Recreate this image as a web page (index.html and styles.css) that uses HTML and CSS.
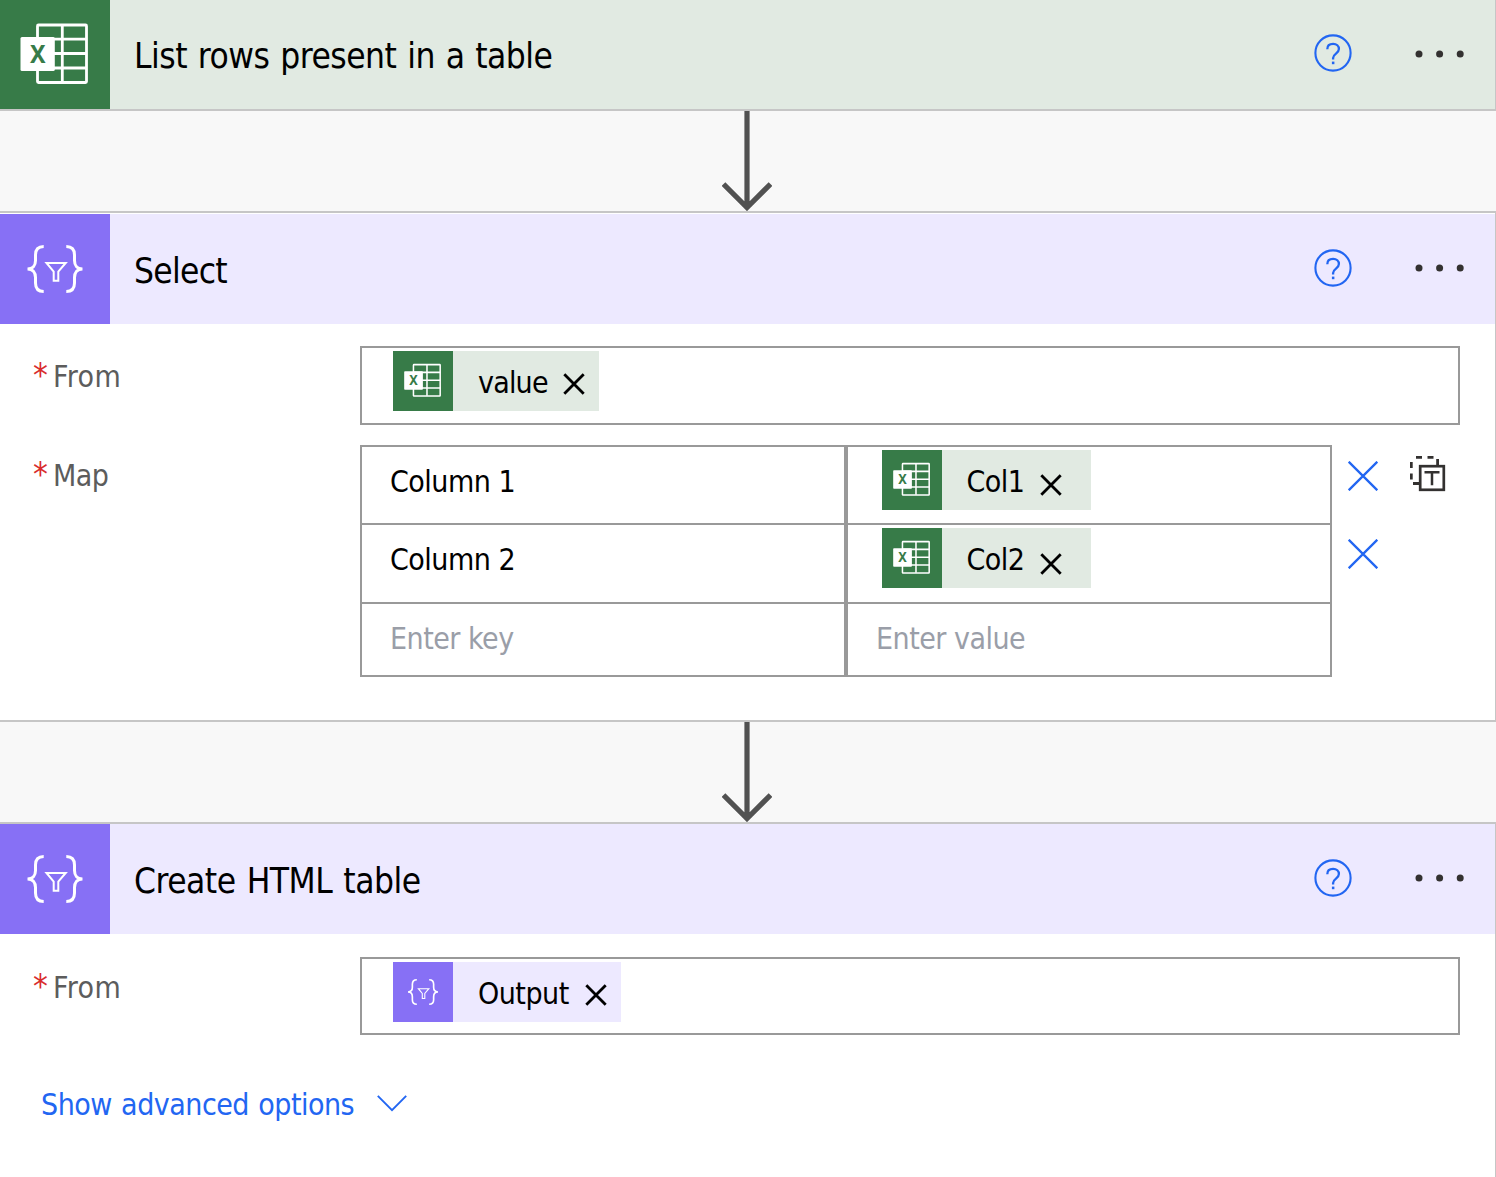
FILE: index.html
```html
<!DOCTYPE html>
<html lang="en">
<head>
<meta charset="utf-8">
<title>Flow designer</title>
<link rel="stylesheet" href="styles.css">
</head>
<body>
<svg class="defs" aria-hidden="true">
  <symbol id="excel" viewBox="0 0 110 110">
    <rect x="37.5" y="25" width="49" height="57.5" rx="1" fill="none" stroke="#fff" stroke-width="2.8"/>
    <path d="M62.3 25V82M37 39.2H87M37 53.5H87M37 68H87" fill="none" stroke="#fff" stroke-width="2.8"/>
    <rect x="20.5" y="37" width="34.3" height="34" rx="1.5" fill="#fff"/>
    <text x="29.9" y="63" textLength="15.6" lengthAdjust="spacingAndGlyphs" class="excel-x">X</text>
  </symbol>
  <symbol id="data" viewBox="0 0 110 110">
    <g fill="none" stroke="#fff">
      <path stroke-width="3" d="M43.7 32.5C38 32.5 35.5 35.5 35.5 41V46.5C35.5 51 33 55 27.5 55C33 55 35.5 59 35.5 63.5V69C35.5 74.5 38 77.5 43.7 77.5M66.3 32.5C72 32.5 74.5 35.5 74.5 41V46.5C74.5 51 77 55 82.5 55C77 55 74.5 59 74.5 63.5V69C74.5 74.5 72 77.5 66.3 77.5"/>
      <path stroke-width="2" d="M46.5 49H65.7L58.3 57.5V66.8H53.7V57.5Z"/>
    </g>
  </symbol>
  <symbol id="help" viewBox="0 0 38 38">
    <circle cx="19" cy="19" r="17.6" fill="none" stroke="#2266f2" stroke-width="2.1"/>
    <path d="M13.3 15.2C13.3 11.8 15.7 9.9 19.1 9.9C22.6 9.9 24.9 12 24.9 15C24.9 19.5 19.1 19.6 19.1 24V25.5" fill="none" stroke="#2266f2" stroke-width="2.3"/>
    <rect x="17.9" y="27.6" width="2.5" height="2.6" fill="#2266f2"/>
  </symbol>
  <symbol id="dots" viewBox="0 0 50 8">
    <g fill="#333130"><circle cx="4" cy="4" r="3.5"/><circle cx="24.6" cy="4" r="3.5"/><circle cx="45.2" cy="4" r="3.5"/></g>
  </symbol>
  <symbol id="cross" viewBox="0 0 22 22"><path d="M1.3 1.3L20.7 20.7M20.7 1.3L1.3 20.7" stroke="#000" stroke-width="2.8"/></symbol>
  <symbol id="remove" viewBox="0 0 30 30"><path d="M.7.7L29.3 29.3M29.3.7L.7 29.3" stroke="#2266f2" stroke-width="2.3"/></symbol>
  <symbol id="arrow" viewBox="0 0 50 100"><path d="M25 0V96M1.5 73L25 96.5L48.5 73" fill="none" stroke="#515151" stroke-width="5.2"/></symbol>
</svg>

<main class="flow">
  <section class="card card-first">
    <header class="head green">
      <svg class="badge"><use href="#excel"/></svg>
      <h2>List rows present in a table</h2>
      <svg class="help"><use href="#help"/></svg>
      <svg class="dots"><use href="#dots"/></svg>
    </header>
  </section>

  <div class="link"><svg><use href="#arrow"/></svg></div>

  <section class="card card-select">
    <header class="head violet">
      <svg class="badge"><use href="#data"/></svg>
      <h2>Select</h2>
      <svg class="help"><use href="#help"/></svg>
      <svg class="dots"><use href="#dots"/></svg>
    </header>
    <div class="row row-from">
      <label class="wide"><i>*</i><span>From</span></label>
      <div class="field">
        <div class="token green tk-value"><svg class="mini"><use href="#excel"/></svg><span>value</span><svg class="x"><use href="#cross"/></svg></div>
      </div>
    </div>
    <div class="row row-map">
      <label><i>*</i><span>Map</span></label>
      <div class="grid">
        <div class="cell">Column 1</div>
        <div class="cell"><div class="token green tk-col"><svg class="mini"><use href="#excel"/></svg><span>Col1</span><svg class="x"><use href="#cross"/></svg></div></div>
        <div class="cell">Column 2</div>
        <div class="cell"><div class="token green tk-col"><svg class="mini"><use href="#excel"/></svg><span>Col2</span><svg class="x"><use href="#cross"/></svg></div></div>
        <div class="cell hint">Enter key</div>
        <div class="cell hint">Enter value</div>
      </div>
      <div class="removes">
        <svg><use href="#remove"/></svg>
        <svg><use href="#remove"/></svg>
      </div>
      <svg class="switch" viewBox="0 0 36 36">
        <path d="M6 1.3H12M17.5 1.3H23.5M27.6 3V9M1.3 6V12M1.3 17.5V23.5M3 27.5H9" fill="none" stroke="#333130" stroke-width="2.8"/>
        <rect x="10.2" y="10.2" width="23.6" height="23.6" fill="#fff" stroke="#333130" stroke-width="2.7"/>
        <path d="M14.5 16.2H29.5M22 16V29.3" fill="none" stroke="#333130" stroke-width="2.5"/>
      </svg>
    </div>
  </section>

  <div class="link"><svg><use href="#arrow"/></svg></div>

  <section class="card card-html">
    <header class="head violet">
      <svg class="badge"><use href="#data"/></svg>
      <h2>Create HTML table</h2>
      <svg class="help"><use href="#help"/></svg>
      <svg class="dots"><use href="#dots"/></svg>
    </header>
    <div class="row row-from">
      <label class="wide"><i>*</i><span>From</span></label>
      <div class="field">
        <div class="token violet tk-output"><svg class="mini"><use href="#data"/></svg><span>Output</span><svg class="x"><use href="#cross"/></svg></div>
      </div>
    </div>
    <a class="advanced"><span>Show advanced options</span>
      <svg viewBox="0 0 30 17"><path d="M.8.8L15 15.2L29.2.8" fill="none" stroke="#2266f2" stroke-width="1.9"/></svg>
    </a>
  </section>
</main>
</body>
</html>
```
FILE: styles.css
```css
* { box-sizing: border-box; }
body {
  margin: 0;
  background: #f8f8f8;
  color: #000;
  font: 30px/40px "DejaVu Sans Condensed", "DejaVu Sans", sans-serif;
  font-stretch: condensed;
  letter-spacing: -.5px;
}
svg { display: block; flex: none; }
.defs { position: absolute; width: 0; height: 0; }
.excel-x { font: 700 25px "Noto Sans", sans-serif; letter-spacing: 0; fill: #377b48; }

.flow { width: 1496px; height: 1177px; overflow: hidden; display: flex; flex-direction: column; }
.card { flex: none; background: #fff; border-right: 1px solid #c6c6c6; }
.card-first { height: 111px; border-bottom: 2px solid #c6c6c6; }
.card-select { height: 511px; border-top: 2px solid #c6c6c6; border-bottom: 2px solid #c6c6c6; padding-top: 1px; }
.card-html { height: 355px; border-top: 2px solid #c6c6c6; }
.link { flex: none; height: 100px; padding-left: 722px; }
.link svg { width: 50px; height: 100px; }

.head { display: flex; align-items: center; height: 110px; }
.card-first .head { height: 109px; overflow: hidden; }
.green { background: #e1eae2; }
.violet { background: #ede9ff; }
.badge { width: 110px; height: 110px; }
.green > .badge, .green > .mini { background: #377b48; }
.violet > .badge, .violet > .mini { background: #8770f5; }
h2 { margin: 4px 0 0 24px; width: 1180px; font-size: 35px; font-weight: 400; line-height: 50px; word-spacing: 1.6px; white-space: nowrap; }
.card-first h2 { margin-top: 2px; word-spacing: 1.3px; }
.help { width: 38px; height: 38px; margin-top: -3px; }
.dots { width: 50px; height: 8px; margin: -2px 0 0 63px; }
.card-select h2 { letter-spacing: -.7px; }

.row { display: flex; align-items: flex-start; }
.row-from { padding-top: 22px; }
.card-html .row-from { padding-top: 23px; }
.row-map { padding-top: 20px; }
label { display: flex; width: 360px; padding: 11px 0 0 33px; color: #5c5c5c; }
label.wide span { letter-spacing: .4px; }
label i { width: 20px; margin-top: -1px; font-size: 33px; color: #d92c2c; font-style: normal; }
.field { width: 1100px; height: 79px; border: 2px solid #999; padding: 3px 0 0 31px; }
.card-html .field { height: 78px; }
.token { display: flex; height: 60px; white-space: nowrap; }
.token span { margin: 12px 0 0 25px; }
.tk-value span { letter-spacing: -.8px; }
.mini { width: 60px; height: 60px; }
.x { width: 22px; height: 22px; margin: 22px 0 0 auto; }
.tk-value { width: 206px; padding-right: 14px; }
.tk-col { width: 209px; padding-right: 29px; }
.tk-col span { margin-left: 24.5px; }
.tk-col .x { margin-top: 24px; }
.tk-output { width: 228px; padding-right: 14px; }

.grid { display: grid; grid-template-columns: 482px 482px; grid-template-rows: 76px 77px 71px; column-gap: 4px; row-gap: 2px; padding: 2px; background: #999; width: 972px; height: 232px; }
.cell { background: #fff; padding: 15px 0 0 28px; white-space: nowrap; }
.cell:has(.token) { padding: 3px 0 0 34px; }
.cell:nth-child(4) .x { margin-top: 25px; }
.hint { color: #9a9ea8; }
.removes { display: grid; gap: 48px; margin: 16px 0 0 16px; }
.removes svg { width: 30px; height: 30px; }
.switch { width: 36px; height: 36px; margin: 11px 0 0 32px; }

.advanced { display: flex; margin: 50px 0 0 41px; color: #2266f2; word-spacing: 1.2px; white-space: nowrap; }
.advanced span { width: 336px; }
.advanced svg { width: 30px; height: 17px; margin-top: 10px; }
```
